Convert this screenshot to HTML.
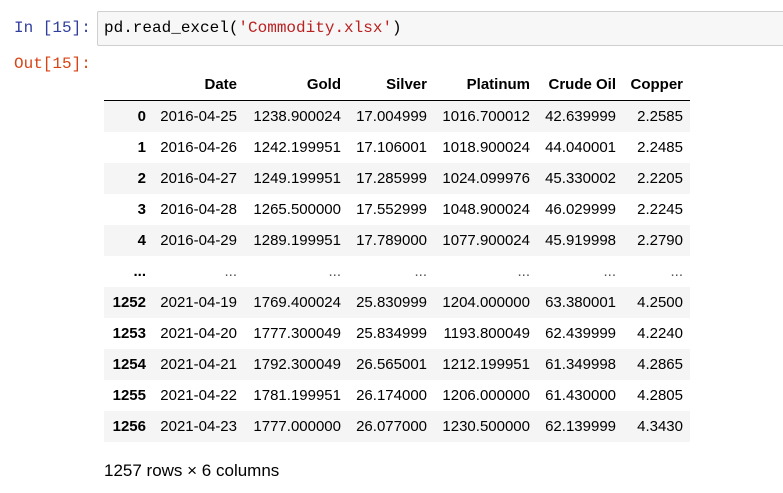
<!DOCTYPE html>
<html><head><style>
body{margin:0;background:#fff;width:783px;height:493px;overflow:hidden;position:relative;font-family:"Liberation Sans",Arial,sans-serif;}
.p{position:absolute;font-family:"Liberation Mono",monospace;font-size:16px;}
.in{left:14px;top:19px;color:#303F9F;}
.out{left:14px;top:55px;color:#D84315;}
.box{position:absolute;left:97px;top:11px;width:700px;height:35px;background:#f7f7f7;border:1px solid #cfcfcf;border-radius:2px;box-sizing:border-box;}
.code{left:104px;top:19px;color:#000;}
.s{color:#BA2121;}
table{position:absolute;left:104px;top:70px;border-collapse:collapse;font-size:15px;color:#000;table-layout:fixed;}
th,td{text-align:right;padding:0 7px 0 7px;height:31px;line-height:31px;white-space:nowrap;overflow:visible;}
thead th{height:30px;line-height:30px;border-bottom:1px solid #000;}
tbody th{font-weight:bold;}
tbody tr:nth-child(odd){background:#f5f5f5;}
.e td{color:#555;}
.f{position:absolute;left:104px;top:461px;font-size:17px;color:#000;}
</style></head><body>
<div class="p in">In [15]:</div>
<div class="box"></div>
<div class="p code">pd.read_excel(<span class="s">'Commodity.xlsx'</span>)</div>
<div class="p out">Out[15]:</div>
<table>
<colgroup><col style="width:49px"><col style="width:91px"><col style="width:104px"><col style="width:86px"><col style="width:103px"><col style="width:86px"><col style="width:67px"></colgroup>
<thead><tr><th></th><th>Date</th><th>Gold</th><th>Silver</th><th>Platinum</th><th>Crude Oil</th><th>Copper</th></tr></thead>
<tbody>
<tr><th>0</th><td>2016-04-25</td><td>1238.900024</td><td>17.004999</td><td>1016.700012</td><td>42.639999</td><td>2.2585</td></tr>
<tr><th>1</th><td>2016-04-26</td><td>1242.199951</td><td>17.106001</td><td>1018.900024</td><td>44.040001</td><td>2.2485</td></tr>
<tr><th>2</th><td>2016-04-27</td><td>1249.199951</td><td>17.285999</td><td>1024.099976</td><td>45.330002</td><td>2.2205</td></tr>
<tr><th>3</th><td>2016-04-28</td><td>1265.500000</td><td>17.552999</td><td>1048.900024</td><td>46.029999</td><td>2.2245</td></tr>
<tr><th>4</th><td>2016-04-29</td><td>1289.199951</td><td>17.789000</td><td>1077.900024</td><td>45.919998</td><td>2.2790</td></tr>
<tr class="e"><th>...</th><td>...</td><td>...</td><td>...</td><td>...</td><td>...</td><td>...</td></tr>
<tr><th>1252</th><td>2021-04-19</td><td>1769.400024</td><td>25.830999</td><td>1204.000000</td><td>63.380001</td><td>4.2500</td></tr>
<tr><th>1253</th><td>2021-04-20</td><td>1777.300049</td><td>25.834999</td><td>1193.800049</td><td>62.439999</td><td>4.2240</td></tr>
<tr><th>1254</th><td>2021-04-21</td><td>1792.300049</td><td>26.565001</td><td>1212.199951</td><td>61.349998</td><td>4.2865</td></tr>
<tr><th>1255</th><td>2021-04-22</td><td>1781.199951</td><td>26.174000</td><td>1206.000000</td><td>61.430000</td><td>4.2805</td></tr>
<tr><th>1256</th><td>2021-04-23</td><td>1777.000000</td><td>26.077000</td><td>1230.500000</td><td>62.139999</td><td>4.3430</td></tr>
</tbody></table>
<div class="f">1257 rows × 6 columns</div>
</body></html>
